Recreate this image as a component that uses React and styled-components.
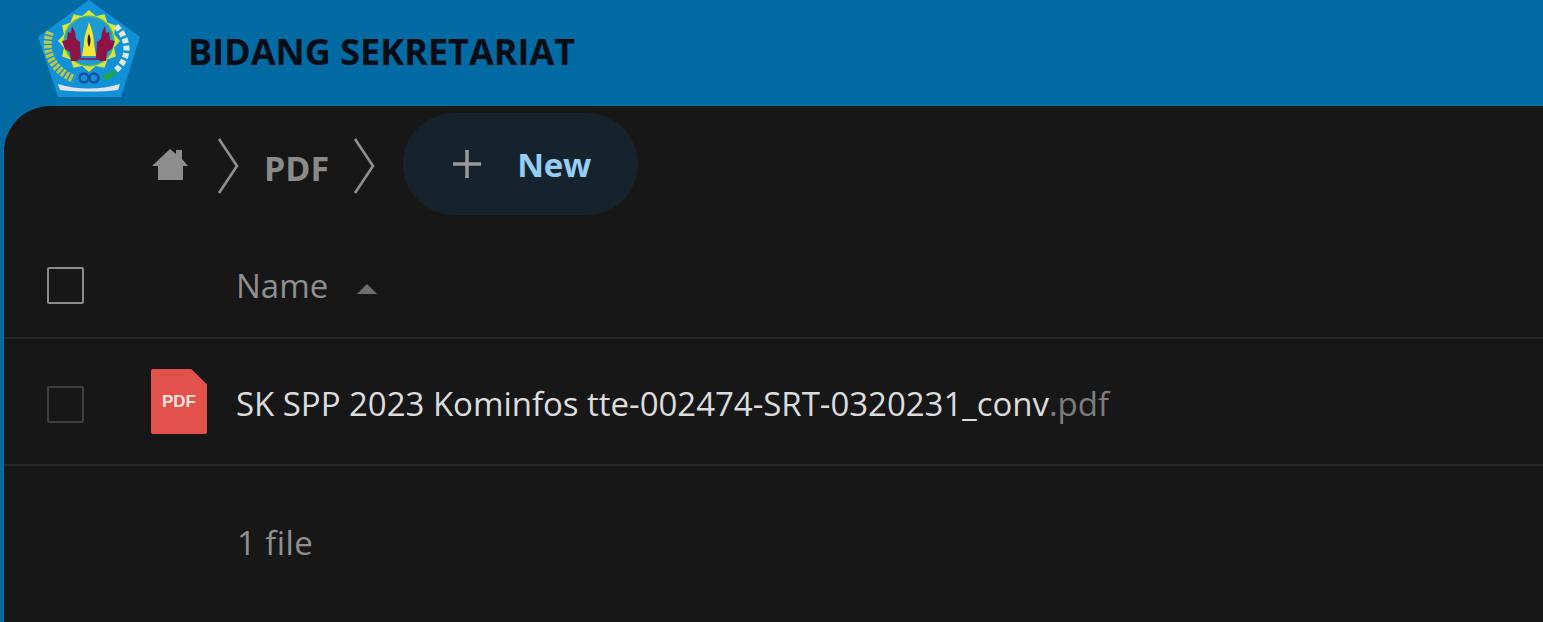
import React from "react";
import styled, { createGlobalStyle } from "styled-components";

const Global = createGlobalStyle`
  html, body { margin: 0; padding: 0; height: 100%; background: #006aa3; overflow: hidden; }
  #root { height: 100%; }
  * { box-sizing: border-box; }
`;
const Page = styled.div`
  height: 622px; display: flex; flex-direction: column; background: #006aa3;
  font-family: "Open Sans", "Noto Sans", sans-serif;
`;
const Header = styled.header`
  height: 106px; flex: none; display: flex; align-items: center; padding-left: 38px;
`;
const LogoBox = styled.svg`
  width: 103px; height: 99px; flex: none; margin-top: -8px; filter: blur(0.7px);
`;
const Title = styled.h1`
  margin: 0 0 0 47px; font-size: 36px; line-height: 1; font-weight: 700; color: #020d15;
  position: relative; top: -1px; white-space: nowrap;
`;
const Panel = styled.main`
  flex: 1; margin-left: 4px; background: #171717; border-top-left-radius: 46px;
  display: flex; flex-direction: column; min-height: 0;
`;
const Crumbs = styled.nav`
  height: 118px; flex: none; padding: 7px 0 0 147px; display: flex; align-items: flex-start;
`;
const CrumbRow = styled.div`
  height: 102px; display: flex; align-items: center;
`;
const HomeIcon = styled.svg` width: 38px; height: 34px; display: block; margin-top: 2px; `;
const Chevron = styled.svg` width: 22px; height: 56px; display: block; margin: 4px 0 0 ${p => p.$ml}px; `;
const CrumbText = styled.span`
  font-size: 34px; font-weight: 700; color: #8a8a8a; margin: 8px 0 0 25px; line-height: 1;
`;
const NewButton = styled.button`
  width: 235px; height: 102px; margin-left: 28px; border: 0; border-radius: 51px; background: #16232c;
  display: flex; align-items: center; padding: 0 0 0 48px; font-family: inherit; cursor: pointer;
`;
const PlusIcon = styled.svg` width: 32px; height: 32px; display: block; `;
const NewLabel = styled.span`
  font-size: 33px; font-weight: 700; color: #95cdf5; margin-left: 34px; line-height: 1; letter-spacing: -0.3px;
`;
const Row = styled.div`
  height: ${p => p.$h}px; flex: none; display: flex; align-items: center; border-bottom: ${p => p.$line ? "2px solid #272727" : "0"};
`;
const HeaderRow = styled(Row)` padding-top: 9px; `;
const CheckCell = styled.div` width: 147px; padding: ${p => p.$pt || 0}px 0 0 43px; flex: none; `;
const Check = styled.div`
  width: 37px; height: 37px; border: 2px solid ${p => p.$dim ? "#3f3f3f" : "#8c8c8c"}; border-radius: 2px;
`;
const Spacer = styled.div` width: 86px; flex: none; margin-right: -1px; `;
const IconCell = styled.div` width: 85px; flex: none; `;
const Muted = styled.span`
  font-size: 33px; color: #8f8f8f; line-height: 1;
`;
const FileCount = styled(Muted)` letter-spacing: 0.4px; `;
const SortIcon = styled.svg` width: 20px; height: 10px; margin: 8px 0 0 29px; display: block; `;
const FileName = styled.span`
  font-size: 33px; color: #dcdcdc; line-height: 1; white-space: nowrap; padding-top: 4px; letter-spacing: -0.03px;
`;
const Ext = styled.span` color: #7c7c7c; `;
const PdfIcon = styled.div`
  width: 56px; height: 65px; background: #e2524a; border-radius: 2px;
  clip-path: polygon(0 0, 72% 0, 100% 24%, 100% 100%, 0 100%);
  display: flex; align-items: center; justify-content: center;
  color: #f7e3e1; font: 700 17px "Liberation Sans", sans-serif;
`;
const Summary = styled(Row)`
  padding-left: 233px;
`;

const star = Array.from({ length: 24 }, (_, i) => {
  const r = i % 2 === 0 ? 31 : 26;
  const a = (i * Math.PI) / 12 - Math.PI / 2;
  return `${51 + r * Math.cos(a)},${41 + r * Math.sin(a)}`;
}).join(" ");

const Logo = () => (
  <LogoBox viewBox="0 0 103 99">
    <polygon points="51,0 102,37 83,97 20,97 0,37" fill="#1192d8" />
    <polygon points={star} fill="#d3e63a" />
    <circle cx="51" cy="41" r="25.5" fill="#57b56c" />
    <circle cx="51" cy="41" r="24" fill="#1f9bd3" />
    <path d="M24 41 l5-1 1-8 3 1 1-7 3 6 1 7 4 3 1 16 -4 3 h-6 l-1-9 -5-3z" fill="#8e1347" />
    <path d="M77 41 l-5-1 -1-8 -3 1 -1-7 -3 6 -1 7 -4 3 -1 16 4 3 h6 l1-9 5-3z" fill="#8e1347" />
    <path d="M51 22 c3 8 5 14 5 22 l2 12 H44 l2-12 c0-8 3-14 5-22z" fill="#f3e62c" />
    <path d="M51 34 c2 3 2 9 0 13 c-2-4-2-10 0-13z" fill="#3b1c17" />
    <path d="M41 58 h20 v2 H41z" fill="#7d2a6a" />
    <path d="M12 32 C5 50 14 70 36 79" fill="none" stroke="#b9c74a" strokeWidth="8" strokeDasharray="3 1.5" />
    <path d="M78 26 C92 40 92 58 78 70" fill="none" stroke="#dfeadf" strokeWidth="6" strokeDasharray="5 2.5" />
    <path d="M64 76 l12-6 3 4 -11 7z" fill="#1ea34e" />
    <circle cx="46" cy="78" r="4.5" fill="none" stroke="#1c4ea0" strokeWidth="2.5" />
    <circle cx="56" cy="78" r="4.5" fill="none" stroke="#1c4ea0" strokeWidth="2.5" />
    <path d="M20 84 C40 90 62 90 82 84 L80 90 C62 92 40 92 22 90z" fill="#e3e3f2" />
  </LogoBox>
);

const ChevronIcon = ({ ml }) => (
  <Chevron $ml={ml} viewBox="0 0 22 56">
    <path d="M2 1 L20 28 L2 55" fill="none" stroke="#8f8f8f" strokeWidth="2.6" />
  </Chevron>
);

export default function App() {
  return (
    <Page>
      <Global />
      <Header>
        <Logo />
        <Title>BIDANG SEKRETARIAT</Title>
      </Header>
      <Panel>
        <Crumbs>
          <CrumbRow>
            <HomeIcon viewBox="0 0 38 34">
              <path d="M19 1 L25 6 V2 H31 V11 L37 18 H32 V32 H7 V18 H1z" fill="#8d8d8d" />
            </HomeIcon>
            <ChevronIcon ml={28} />
            <CrumbText>PDF</CrumbText>
            <ChevronIcon ml={24} />
            <NewButton>
              <PlusIcon viewBox="0 0 32 32">
                <path d="M16 2 V30 M2 16 H30" stroke="#9a9a9a" strokeWidth="3.5" fill="none" />
              </PlusIcon>
              <NewLabel>New</NewLabel>
            </NewButton>
          </CrumbRow>
        </Crumbs>
        <HeaderRow $h={115} $line>
          <CheckCell><Check /></CheckCell>
          <Spacer />
          <Muted>Name</Muted>
          <SortIcon viewBox="0 0 20 10"><path d="M10 0 L20 10 H0z" fill="#6e6e6e" /></SortIcon>
        </HeaderRow>
        <Row $h={127} $line>
          <CheckCell $pt={6}><Check $dim /></CheckCell>
          <IconCell><PdfIcon>PDF</PdfIcon></IconCell>
          <FileName>SK SPP 2023 Kominfos tte-002474-SRT-0320231_conv<Ext>.pdf</Ext></FileName>
        </Row>
        <Summary $h={152}>
          <FileCount>1 file</FileCount>
        </Summary>
      </Panel>
    </Page>
  );
}
